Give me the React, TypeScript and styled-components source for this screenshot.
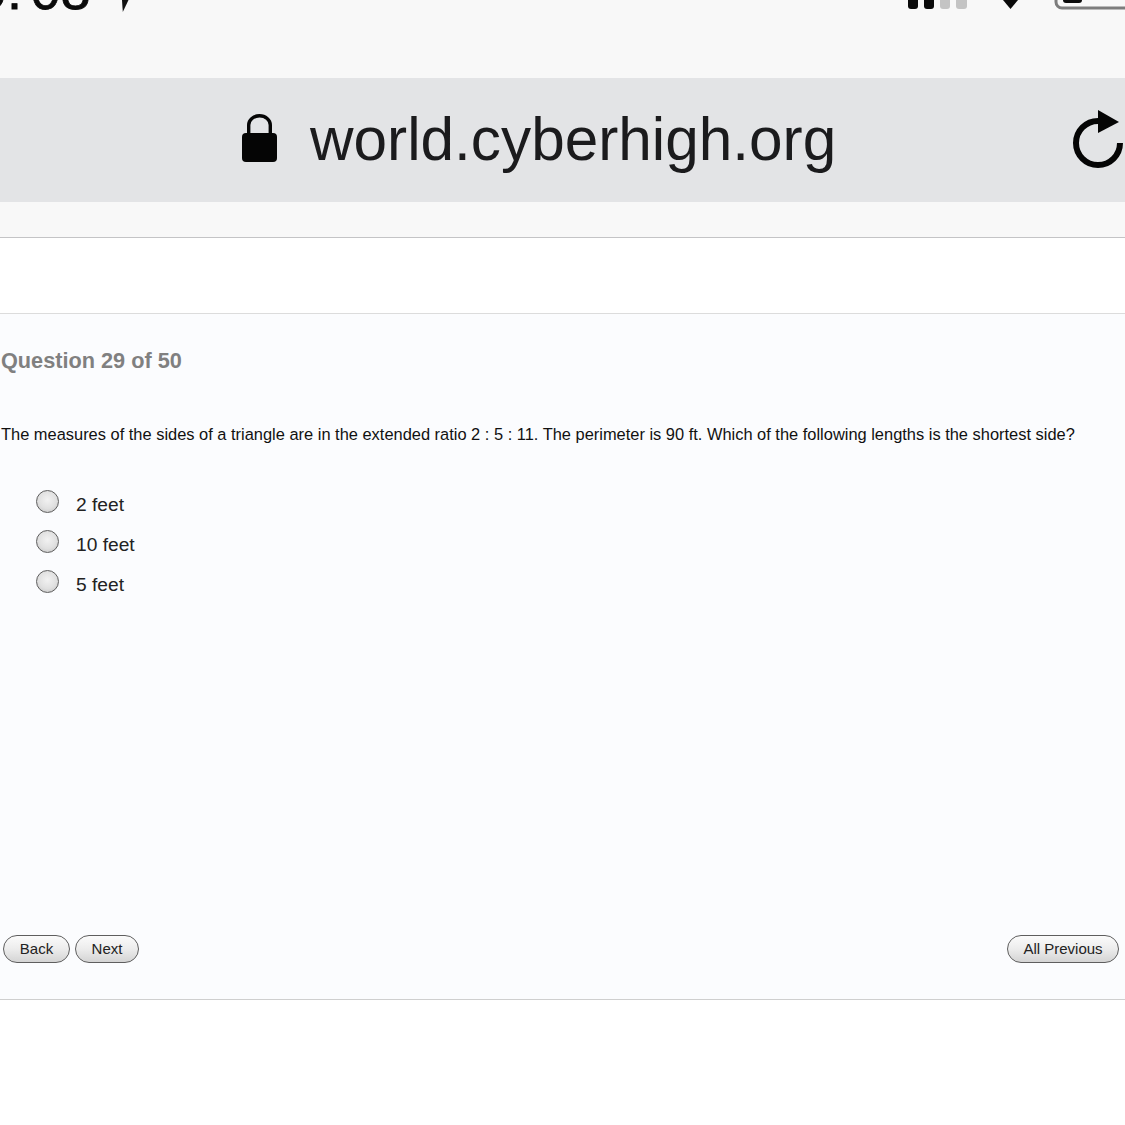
import React from "react";
import styled, { createGlobalStyle } from "styled-components";

const Global = createGlobalStyle`
  html, body { margin: 0; padding: 0; background: #ffffff; }
  body { font-family: "Liberation Sans", Arial, sans-serif; color: #111; }
`;

const Page = styled.div`
  width: 1125px;
  height: 1125px;
  overflow: hidden;
  display: flex;
  flex-direction: column;
  background: #ffffff;
`;

const StatusBar = styled.div`
  height: 78px;
  flex: none;
  background: #f8f8f8;
  overflow: hidden;
  display: flex;
  align-items: flex-start;
`;

const Time = styled.div`
  width: 122px;
  flex: none;
  margin-top: -38px;
  margin-left: -23px;
  padding-right: 23px;
  font-size: 54px;
  line-height: 56px;
  font-weight: 400;
  color: #0a0a0a;
  -webkit-text-stroke: 0.8px #0a0a0a;
  white-space: nowrap;
`;

const TimeColon = styled.span`
  margin-right: 8.5px;
`;

const StatusIcons = styled.div`
  flex: 1;
  display: flex;
  justify-content: space-between;
  align-items: flex-start;
`;

const UrlBar = styled.div`
  height: 124px;
  flex: none;
  background: #e3e4e6;
  display: flex;
  align-items: center;
`;

const Lock = styled.svg`
  margin-left: 241px;
  flex: none;
`;

const Url = styled.div`
  margin-left: 33px;
  margin-top: -2px;
  font-size: 60.3px;
  line-height: 72px;
  color: #1b1b1d;
  white-space: nowrap;
  flex: 1;
`;

const Reload = styled.svg`
  flex: none;
  margin-top: 4px;
`;

const Gap = styled.div`
  height: 35px;
  flex: none;
  background: #f8f8f8;
  border-bottom: 1px solid #c4c4c6;
`;

const WhiteBand = styled.div`
  height: 75px;
  flex: none;
  background: #ffffff;
`;

const Panel = styled.div`
  height: 687px;
  flex: none;
  box-sizing: border-box;
  background: #fbfcfe;
  border-top: 1px solid #dcdcdc;
  border-bottom: 1px solid #cfcfcf;
  display: flex;
  flex-direction: column;
  padding: 35px 0 0 1px;
`;

const Heading = styled.div`
  font-size: 21.7px;
  line-height: 24px;
  font-weight: 700;
  color: #808080;
`;

const Prompt = styled.div`
  margin-top: 51px;
  font-size: 16.43px;
  line-height: 20px;
  color: #111;
  white-space: nowrap;
`;

const Options = styled.div`
  margin-top: 47px;
  margin-left: 35px;
  display: flex;
  flex-direction: column;
  gap: 14px;
`;

const Option = styled.div`
  height: 26px;
  box-sizing: border-box;
  display: flex;
  align-items: center;
  gap: 17px;
  font-size: 19.2px;
  color: #222;
  padding-top: 1px;
`;

const Radio = styled.span`
  width: 23px;
  height: 23px;
  box-sizing: border-box;
  border-radius: 50%;
  flex: none;
  margin-top: -7px;
  border: 1.5px solid #5e5e5e;
  background: radial-gradient(circle at 50% 42%, #f2f2f2 0%, #e0e0e0 55%, #bdbdbd 100%);
`;

const Actions = styled.div`
  margin-top: auto;
  margin-bottom: 36px;
  padding: 0 6px 0 2px;
  display: flex;
  gap: 5px;
`;

const Pill = styled.button<{ $push?: boolean; $w: number }>`
  width: ${(p) => p.$w}px;
  height: 28px;
  box-sizing: border-box;
  margin-left: ${(p) => (p.$push ? "auto" : "0")};
  padding: 0 0 2px;
  border: 1.5px solid #5e5e5e;
  border-radius: 14px;
  background: linear-gradient(180deg, #fbfbfb 0%, #ececec 50%, #d4d4d4 100%);
  font-family: "Liberation Sans", Arial, sans-serif;
  font-size: 15px;
  color: #222;
`;

export default function App() {
  return (
    <Page>
      <Global />
      <StatusBar>
        <Time>9<TimeColon>:</TimeColon>08</Time>
        <StatusIcons>
          <svg width="10" height="14" viewBox="0 0 10 14">
            <path d="M0 0 H6.5 L0.8 12 Z" fill="#111" />
          </svg>
          <svg width="218" height="12" viewBox="0 0 218 12">
            <rect x="1" y="-8" width="10" height="17" rx="3" fill="#0a0a0a" />
            <rect x="17" y="-8" width="10" height="17" rx="3" fill="#0a0a0a" />
            <rect x="33" y="-8" width="10" height="17" rx="3" fill="#c4c4c4" />
            <rect x="49" y="-8" width="11" height="17" rx="3" fill="#c4c4c4" />
            <path d="M96 0 H111 L103.5 9 Z" fill="#0a0a0a" />
            <rect x="149" y="-12" width="80" height="20" rx="6" fill="none" stroke="#7d7d7d" strokeWidth="3" />
            <rect x="156" y="-10" width="19" height="13" rx="3" fill="#0a0a0a" />
          </svg>
        </StatusIcons>
      </StatusBar>
      <UrlBar>
        <Lock width="36" height="52" viewBox="0 0 36 52">
          <path d="M7.7 22 V11 A10.8 9.3 0 0 1 29.3 11 V22" fill="none" stroke="#050505" strokeWidth="3.4" />
          <rect x="1" y="19" width="35" height="29" rx="4" fill="#050505" />
        </Lock>
        <Url>world.cyberhigh.org</Url>
        <Reload width="54" height="66" viewBox="0 0 54 66">
          <path d="M27 12 A22 22 0 1 0 49 34" fill="none" stroke="#050505" strokeWidth="6" />
          <path d="M27 1 L48 13 L27 24 Z" fill="#050505" />
        </Reload>
      </UrlBar>
      <Gap />
      <WhiteBand />
      <Panel>
        <Heading>Question 29 of 50</Heading>
        <Prompt>
          The measures of the sides of a triangle are in the extended ratio 2 : 5 : 11. The perimeter is 90 ft. Which of the following lengths is the shortest side?
        </Prompt>
        <Options>
          <Option><Radio />2 feet</Option>
          <Option><Radio />10 feet</Option>
          <Option><Radio />5 feet</Option>
        </Options>
        <Actions>
          <Pill $w={67}>Back</Pill>
          <Pill $w={64}>Next</Pill>
          <Pill $w={112} $push>All Previous</Pill>
        </Actions>
      </Panel>
    </Page>
  );
}
